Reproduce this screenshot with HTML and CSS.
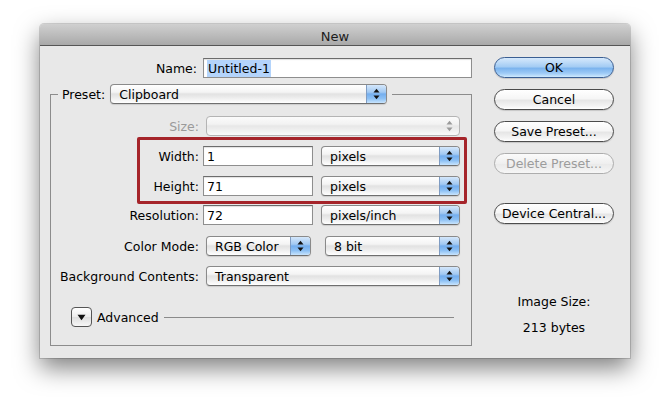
FILE: index.html
```html
<!DOCTYPE html>
<html>
<head>
<meta charset="utf-8">
<link rel="stylesheet" href="styles.css">
</head>
<body>
<div class="window">
  <div class="titlebar">New</div>
  <div class="content">
    <div class="left">
      <div class="row name-row">
        <span class="lbl">Name:</span>
        <div class="input name-input"><span class="sel">Untitled-1</span></div>
      </div>
      <fieldset class="group">
        <legend class="legend">
          <div class="legend-inner">
            <span class="legend-lbl">Preset:</span>
            <div class="popup preset"><span class="ptext">Clipboard</span><span class="arrows"><svg width="7" height="12" viewBox="0 0 7 12"><polygon points="0.5,4.5 6.5,4.5 3.5,0.8"/><polygon points="0.5,7.5 6.5,7.5 3.5,11.2"/></svg></span></div>
          </div>
        </legend>
        <div class="row">
          <span class="lbl disabled">Size:</span>
          <div class="popup first wide off"><span class="ptext"></span><span class="arrows"><svg width="7" height="12" viewBox="0 0 7 12"><polygon points="0.5,4.5 6.5,4.5 3.5,0.8"/><polygon points="0.5,7.5 6.5,7.5 3.5,11.2"/></svg></span></div>
        </div>
        <div class="highlight">
          <div class="row">
            <span class="lbl">Width:</span>
            <div class="input num">1</div>
            <div class="popup unit"><span class="ptext">pixels</span><span class="arrows"><svg width="7" height="12" viewBox="0 0 7 12"><polygon points="0.5,4.5 6.5,4.5 3.5,0.8"/><polygon points="0.5,7.5 6.5,7.5 3.5,11.2"/></svg></span></div>
          </div>
          <div class="row">
            <span class="lbl">Height:</span>
            <div class="input num">71</div>
            <div class="popup unit"><span class="ptext">pixels</span><span class="arrows"><svg width="7" height="12" viewBox="0 0 7 12"><polygon points="0.5,4.5 6.5,4.5 3.5,0.8"/><polygon points="0.5,7.5 6.5,7.5 3.5,11.2"/></svg></span></div>
          </div>
        </div>
        <div class="row res-row">
          <span class="lbl">Resolution:</span>
          <div class="input num">72</div>
          <div class="popup unit"><span class="ptext">pixels/inch</span><span class="arrows"><svg width="7" height="12" viewBox="0 0 7 12"><polygon points="0.5,4.5 6.5,4.5 3.5,0.8"/><polygon points="0.5,7.5 6.5,7.5 3.5,11.2"/></svg></span></div>
        </div>
        <div class="row mode-row">
          <span class="lbl">Color Mode:</span>
          <div class="popup first mode"><span class="ptext">RGB Color</span><span class="arrows"><svg width="7" height="12" viewBox="0 0 7 12"><polygon points="0.5,4.5 6.5,4.5 3.5,0.8"/><polygon points="0.5,7.5 6.5,7.5 3.5,11.2"/></svg></span></div>
          <div class="popup bits"><span class="ptext">8 bit</span><span class="arrows"><svg width="7" height="12" viewBox="0 0 7 12"><polygon points="0.5,4.5 6.5,4.5 3.5,0.8"/><polygon points="0.5,7.5 6.5,7.5 3.5,11.2"/></svg></span></div>
        </div>
        <div class="row bg-row">
          <span class="lbl">Background Contents:</span>
          <div class="popup first wide"><span class="ptext">Transparent</span><span class="arrows"><svg width="7" height="12" viewBox="0 0 7 12"><polygon points="0.5,4.5 6.5,4.5 3.5,0.8"/><polygon points="0.5,7.5 6.5,7.5 3.5,11.2"/></svg></span></div>
        </div>
        <div class="advanced">
          <span class="disclosure"><svg width="9" height="7" viewBox="0 0 9 7"><polygon points="0.5,0.8 8.5,0.8 4.5,6.2"/></svg></span>
          <span class="adv-text">Advanced</span>
          <span class="rule"></span>
        </div>
      </fieldset>
    </div>
    <div class="right">
      <div class="btn default">OK</div>
      <div class="btn">Cancel</div>
      <div class="btn">Save Preset...</div>
      <div class="btn off">Delete Preset...</div>
      <div class="btn">Device Central...</div>
      <div class="size-title">Image Size:</div>
      <div class="size-value">213 bytes</div>
    </div>
  </div>
</div>
</body>
</html>
```
FILE: styles.css
```css
html, body {
  margin: 0;
  padding: 0;
  background: #ffffff;
}
body {
  font-family: "DejaVu Sans", "Liberation Sans", sans-serif;
  font-size: 12.5px;
  color: #000;
  padding: 24px 0 40px 40px;
}
.window {
  width: 590px;
  height: 334px;
  box-sizing: border-box;
  background: #e8e8e8;
  border-radius: 4px 4px 0 0;
  box-shadow: 0 10px 24px rgba(0, 0, 0, 0.5), 0 0 0 1px rgba(0, 0, 0, 0.15);
  display: flex;
  flex-direction: column;
}
.titlebar {
  height: 22px;
  flex-shrink: 0;
  box-sizing: border-box;
  padding-top: 3px;
  border-bottom: 1px solid #565656;
  background: linear-gradient(#d0d0d0, #a9a9a9);
  border-radius: 4px 4px 0 0;
  display: flex;
  align-items: center;
  justify-content: center;
  font-size: 13px;
  color: #1c1c1c;
}
.content {
  display: flex;
  align-items: flex-start;
  padding: 11px 0 0 10px;
}
.left {
  width: 422px;
  padding-top: 1px;
}
.row {
  display: flex;
  align-items: center;
  height: 20px;
}
.lbl {
  width: 148px;
  flex-shrink: 0;
  text-align: right;
  margin-right: 4px;
  white-space: nowrap;
}
.lbl.disabled {
  color: #9a9a9a;
}
.name-row .lbl {
  width: 147px;
  margin-right: 6px;
}
.input {
  height: 20px;
  box-sizing: border-box;
  border: 1px solid #8e8e8e;
  border-top-color: #6c6c6c;
  background: #fff;
  box-shadow: inset 0 1px 1px rgba(0, 0, 0, 0.12);
  padding-left: 3px;
  display: flex;
  align-items: center;
}
.name-input {
  width: 269px;
}
.sel {
  background: #b4d4fb;
  padding: 1px 1px;
}
.num {
  width: 110px;
}
.group {
  margin: 6px 0 0 0;
  padding: 12px 0 18px 0;
  border: 1px solid #8c8c8c;
  min-inline-size: 0;
  width: 422px;
  box-sizing: border-box;
}
.legend {
  margin-left: 7px;
  padding: 0 5px 0 4px;
}
.legend-inner {
  display: flex;
  align-items: center;
  height: 20px;
}
.legend-lbl {
  margin-right: 5px;
}
.popup {
  height: 20px;
  box-sizing: border-box;
  border: 1px solid #8a8a8a;
  border-bottom-color: #6f6f6f;
  border-radius: 4px;
  display: flex;
  align-items: stretch;
  background: linear-gradient(#ffffff 0%, #f4f4f4 40%, #e2e2e2 50%, #ececec 70%, #ffffff 100%);
  box-shadow: 0 1px 1px rgba(0, 0, 0, 0.12);
}
.ptext {
  flex: 1;
  padding-left: 8px;
  display: flex;
  align-items: center;
  white-space: nowrap;
}
.arrows {
  width: 19px;
  flex-shrink: 0;
  display: flex;
  align-items: center;
  justify-content: center;
  border-left: 1px solid #7f9cc2;
  border-radius: 0 3px 3px 0;
  background: linear-gradient(#d4e7fb 0%, #a2c9f2 40%, #74aeee 50%, #8cc0f4 75%, #c8e4fd 100%);
}
.arrows svg {
  fill: #111;
}
.preset {
  width: 277px;
}
.first {
  margin-left: 3px;
}
.wide {
  width: 254px;
}
.unit {
  width: 139px;
  margin-left: 8px;
}
.mode {
  width: 105px;
}
.bits {
  width: 135px;
  margin-left: 14px;
}
.popup.off {
  border-color: #b4b4b4;
  box-shadow: none;
  background: linear-gradient(#fbfbfb 0%, #f2f2f2 40%, #e7e7e7 50%, #eeeeee 70%, #fafafa 100%);
}
.popup.off .arrows {
  background: transparent;
  border-left: none;
}
.popup.off .arrows svg {
  fill: #9a9a9a;
}
.highlight {
  margin: 1px 0 0 86px;
  width: 330px;
  box-sizing: border-box;
  border: 3px solid #a5242a;
  border-radius: 2px;
  padding: 6px 0 5px 0;
  display: flex;
  flex-direction: column;
  gap: 10px;
}
.highlight .lbl {
  width: 59px;
}
.res-row {
  margin-top: 1px;
}
.mode-row {
  margin-top: 11px;
}
.bg-row {
  margin-top: 10px;
}
.advanced {
  margin-top: 21px;
  height: 20px;
  display: flex;
  align-items: center;
}
.disclosure {
  margin-left: 20px;
  width: 21px;
  height: 20px;
  box-sizing: border-box;
  border: 1px solid #555;
  border-radius: 4px;
  background: linear-gradient(#ffffff, #ececec 50%, #dedede 51%, #f7f7f7);
  display: flex;
  align-items: center;
  justify-content: center;
}
.disclosure svg {
  fill: #111;
}
.adv-text {
  margin-left: 5px;
}
.rule {
  flex: 1;
  height: 1px;
  background: #8a8a8a;
  margin: 0 17px 0 5px;
}
.right {
  margin-left: 22px;
  width: 120px;
  display: flex;
  flex-direction: column;
}
.btn {
  height: 21px;
  box-sizing: border-box;
  border: 1px solid #4c4c4c;
  border-radius: 11px;
  background: linear-gradient(#ffffff 0%, #f6f6f6 45%, #e6e6e6 55%, #f4f4f4 85%, #ffffff 100%);
  box-shadow: 0 1px 1px rgba(0, 0, 0, 0.15);
  display: flex;
  align-items: center;
  justify-content: center;
  margin-bottom: 11px;
  white-space: nowrap;
}
.btn.default {
  border-color: #3b5f93;
  background: linear-gradient(#d6e9fc 0%, #a5cdf4 45%, #7cb4ee 55%, #9dcaf6 80%, #cfeafe 100%);
}
.btn.off {
  color: #9c9c9c;
  border-color: #adadad;
  box-shadow: none;
  background: linear-gradient(#fbfbfb, #efefef 50%, #e9e9e9 51%, #f6f6f6);
  margin-bottom: 29px;
}
.size-title {
  margin-top: 59px;
  line-height: 16px;
  text-align: center;
}
.size-value {
  margin-top: 10px;
  line-height: 16px;
  text-align: center;
}
```
